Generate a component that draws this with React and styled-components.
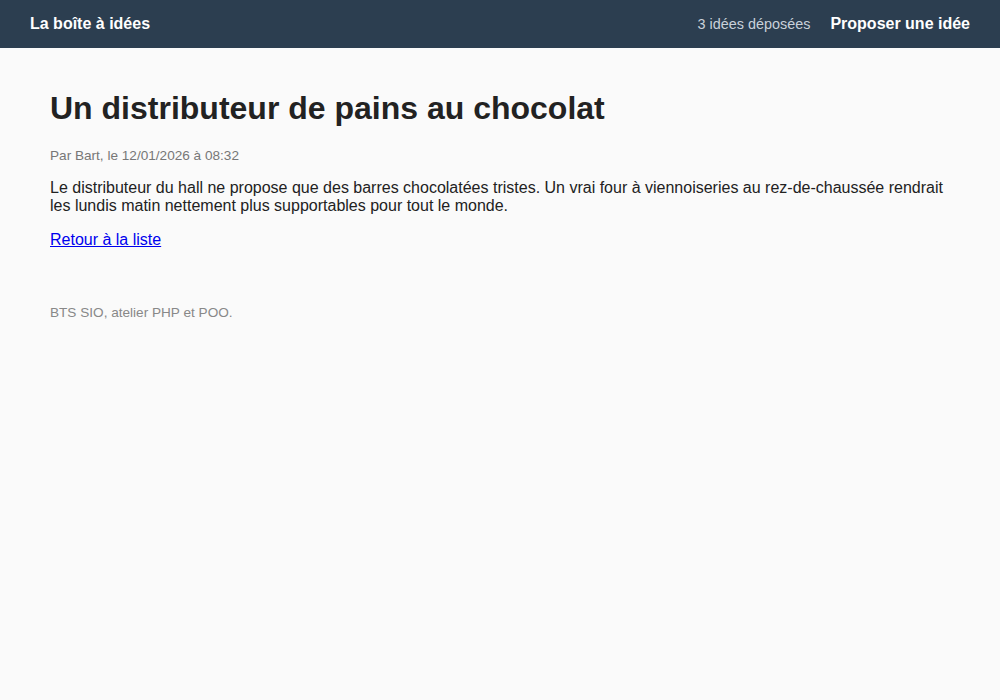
import React from "react";
import styled, { createGlobalStyle } from "styled-components";

const Global = createGlobalStyle`
  html, body { margin: 0; padding: 0; background: #fafafa; }
  body { font-family: "Liberation Sans", Arial, sans-serif; color: #222; }
`;

const Header = styled.header`
  height: 48px;
  background: #2c3e50;
  display: flex;
  align-items: center;
  justify-content: space-between;
  padding: 0 30px;
  color: #fff;
`;

const Brand = styled.a`
  font-weight: bold;
  font-size: 16px;
  color: #fff;
  text-decoration: none;
`;

const Nav = styled.nav`
  display: flex;
  align-items: center;
  gap: 20px;
`;

const Count = styled.span`
  font-size: 14.4px;
  color: #c9d1da;
`;

const NavLink = styled.a`
  font-weight: bold;
  font-size: 16px;
  color: #fff;
  text-decoration: none;
`;

const Main = styled.main`
  padding: 42px 50px 0;
`;

const Title = styled.h1`
  font-size: 32px;
  margin: 0 0 21px;
  line-height: 37px;
`;

const Meta = styled.p`
  font-size: 13.6px;
  line-height: 16px;
  color: #777;
  margin: 0 0 15px;
`;

const Body = styled.p`
  font-size: 16px;
  line-height: 18px;
  margin: 0 0 16px;
`;

const Back = styled.a`
  font-size: 16px;
  color: #0000ee;
  text-decoration: underline;
`;

const BackRow = styled.p`
  margin: 0;
  font-size: 16px;
  line-height: 18px;
`;

const Footer = styled.footer`
  padding: 56px 50px 0;
  font-size: 13.6px;
  line-height: 16px;
  color: #888;
`;

export default function App() {
  return (
    <>
      <Global />
      <Header>
        <Brand href="#">La boîte à idées</Brand>
        <Nav>
          <Count>3 idées déposées</Count>
          <NavLink href="#">Proposer une idée</NavLink>
        </Nav>
      </Header>
      <Main>
        <Title>Un distributeur de pains au chocolat</Title>
        <Meta>Par Bart, le 12/01/2026 à 08:32</Meta>
        <Body>
          Le distributeur du hall ne propose que des barres chocolatées tristes. Un vrai four à viennoiseries au rez-de-chaussée rendrait les lundis matin nettement plus supportables pour tout le monde.
        </Body>
        <BackRow>
          <Back href="#">Retour à la liste</Back>
        </BackRow>
      </Main>
      <Footer>BTS SIO, atelier PHP et POO.</Footer>
    </>
  );
}
